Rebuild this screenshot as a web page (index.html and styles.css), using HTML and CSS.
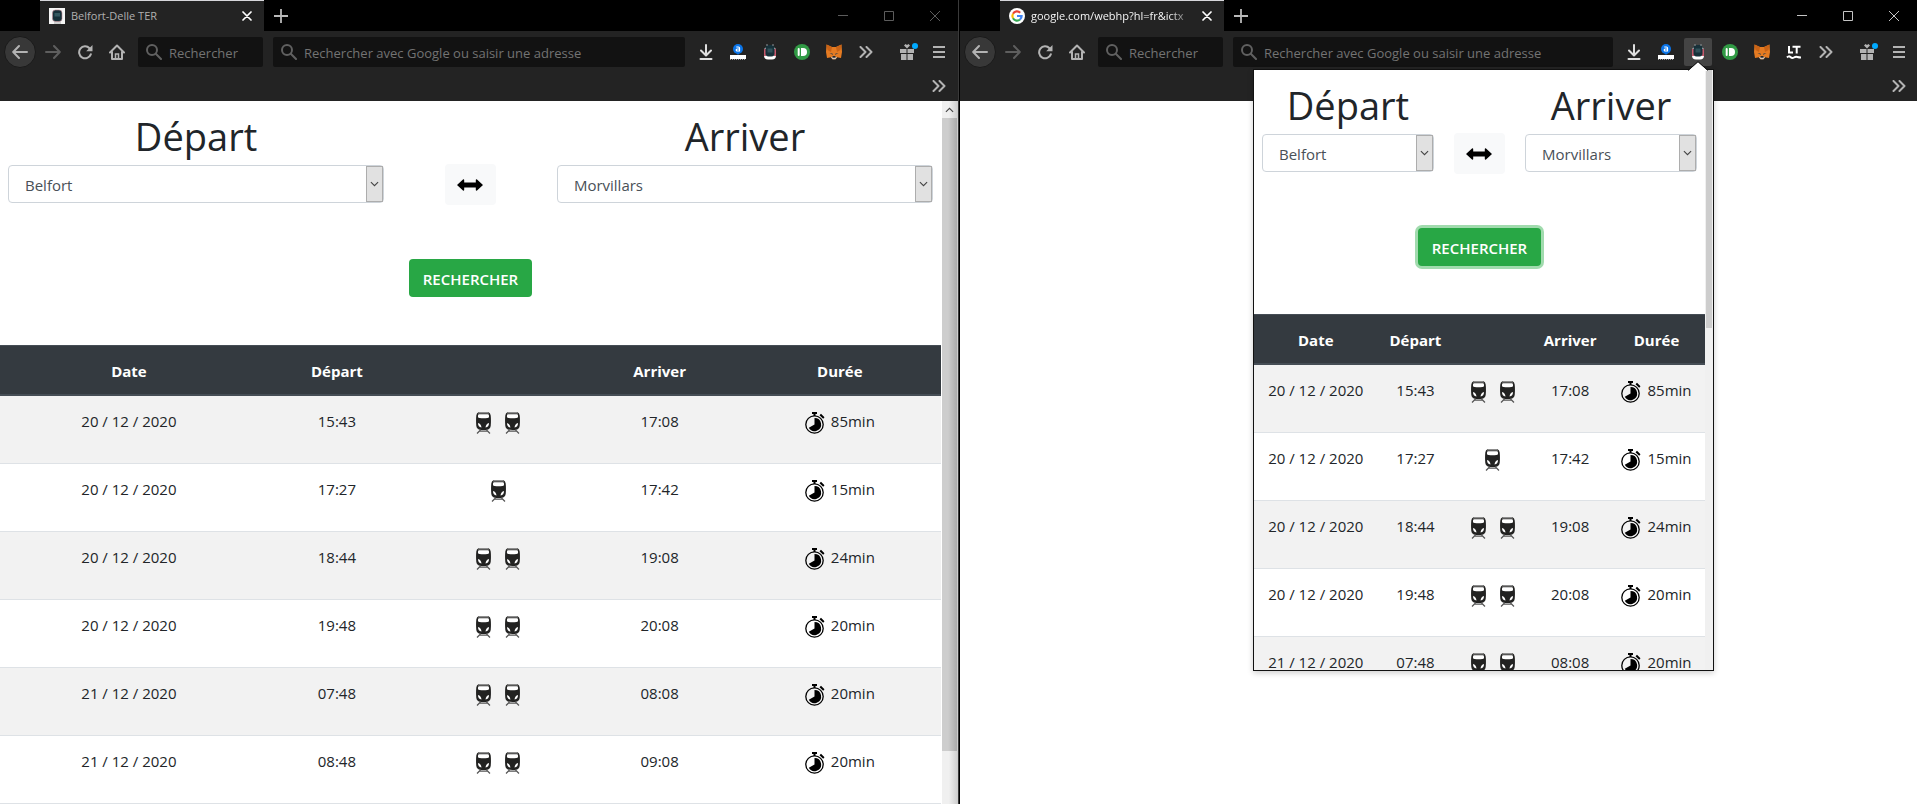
FILE: index.html
```
<!DOCTYPE html>
<html lang="fr">
<head>
<meta charset="utf-8">
<title>Belfort-Delle TER</title>
<link rel="stylesheet" href="styles.css">
</head>
<body>
<svg class="defs" aria-hidden="true">
  <symbol id="i-back" viewBox="0 0 16 16"><path d="M15 8H1.500M7 2L1.200 8 7 14" fill="none" stroke="currentColor" stroke-width="2" stroke-linecap="round" stroke-linejoin="round"/></symbol>
  <symbol id="i-forward" viewBox="0 0 16 16"><path d="M1 8h13.500M9 2l5.800 6L9 14" fill="none" stroke="currentColor" stroke-width="2" stroke-linecap="round" stroke-linejoin="round"/></symbol>
  <symbol id="i-reload" viewBox="0 0 16 16"><path d="M13.800 10.300A6 6 0 1 1 12.500 4.200" fill="none" stroke="currentColor" stroke-width="2" stroke-linecap="round"/><path d="M15.500 1v6.300H9.200z" fill="currentColor"/></symbol>
  <symbol id="i-home" viewBox="0 0 16 16"><path d="M1 8.500L8 1.500l7 7M3 8v7h10V8" fill="none" stroke="currentColor" stroke-width="2" stroke-linecap="round" stroke-linejoin="round"/><path d="M6.500 15v-5h3v5z" fill="none" stroke="currentColor" stroke-width="1.500"/></symbol>
  <symbol id="i-search" viewBox="0 0 16 16"><circle cx="6" cy="6" r="5" fill="none" stroke="currentColor" stroke-width="2"/><path d="M9.800 9.800L15 15" stroke="currentColor" stroke-width="2" stroke-linecap="round"/></symbol>
  <symbol id="i-close" viewBox="0 0 10 10"><path d="M1 1l8 8M9 1L1 9" stroke="currentColor" stroke-width="1.700" stroke-linecap="round"/></symbol>
  <symbol id="i-plus" viewBox="0 0 14 14"><path d="M7 0v14M0 7h14" stroke="currentColor" stroke-width="1.800"/></symbol>
  <symbol id="i-min" viewBox="0 0 10 10"><path d="M0 4.500h10" stroke="currentColor"/></symbol>
  <symbol id="i-max" viewBox="0 0 10 10"><path d="M.5.5h9v9h-9z" fill="none" stroke="currentColor"/></symbol>
  <symbol id="i-quit" viewBox="0 0 10 10"><path d="M0 0l10 10M10 0L0 10" stroke="currentColor"/></symbol>
  <symbol id="i-download" viewBox="0 0 16 16"><path d="M8 1v10M3 6.500l5 5 5-5M2.500 15h11" fill="none" stroke="#dedede" stroke-width="2" stroke-linecap="round" stroke-linejoin="round"/></symbol>
  <symbol id="i-mark" viewBox="0 0 16 16"><circle cx="8" cy="5" r="5" fill="#0a74e8"/><path d="M6.500 9h3L8 11z" fill="#0a74e8"/><path d="M6.300 3h2.200q1 0 1 1v3H7.200Q6.200 7 6.200 6t1-1h2.300" fill="none" stroke="#fff" stroke-width="1.200"/><path d="M0 11h16v4H0z" fill="#fff"/><path d="M0 15.500h16" stroke="#999" stroke-dasharray="1 1"/></symbol>
  <symbol id="i-ter" viewBox="0 0 16 16"><rect x="2" y="3" width="12" height="12.500" rx="4" fill="#fff"/><path d="M3 5v7M13 5v7" stroke="#b4253e" stroke-width="1.500"/><rect x="3.500" y="1" width="9" height="11.500" rx="3" fill="#17313a"/><path d="M5.500 4.500h5v4h-5z" fill="#31525a"/><path d="M5 0v2M11 0v2" stroke="#8b9296"/></symbol>
  <symbol id="i-ter-tab" viewBox="0 0 16 16"><path fill="#f5f5f5" d="M0 0h16v16H0z"/><rect x="3.500" y="2" width="9.500" height="11.500" rx="3" fill="#17313a" stroke="#bc8791" stroke-width=".6"/><path d="M5.500 5h5.500v3.500H5.500z" fill="#355860"/><path d="M5 15h7" stroke="#aaa"/></symbol>
  <symbol id="i-green" viewBox="0 0 16 16"><circle cx="8" cy="8" r="8" fill="#319a45"/><path d="M4.700 5v6" stroke="#fff" stroke-width="2" stroke-linecap="round"/><path d="M7 4h2a4 4 0 0 1 0 8H7z" fill="#fff"/></symbol>
  <symbol id="i-fox" viewBox="0 0 16 16"><path d="M.5.500L6 3h4l5.500-2.500L16 8l-1 6-4-.8-1.500 2h-3L5 13.200 1 14 0 8z" fill="#e57b22"/><path d="M.5.500L6 3 5 8 1.500 6zM15.500.500L10 3l1 5 3.500-2z" fill="#c96316"/><path d="M3.500 9l3 .5.5 1.500zM12.500 9l-3 .5-.5 1.500z" fill="#34424d"/><path d="M5 13.200l1.500-.5h3l1.500.5-1.500 2h-3z" fill="#d8c5b5"/><path d="M6.500 12h3v1.700h-3z" fill="#24272b"/></symbol>
  <symbol id="i-lt" viewBox="0 0 16 16"><path d="M3 2v6.500h4M6.500 2.700h8M10.700 2.700v6.800" fill="none" stroke="#fff" stroke-width="2"/><path d="M1 13.500q1.700-2 3.400-.5t3.500.5 3.500-.5 3.600.5" fill="none" stroke="#fff" stroke-width="2"/></symbol>
  <symbol id="i-more" viewBox="0 0 14 12"><path d="M1.500 1l5 5-5 5M7.500 1l5 5-5 5" fill="none" stroke="currentColor" stroke-width="2" stroke-linecap="round" stroke-linejoin="round"/></symbol>
  <symbol id="i-gift" viewBox="0 0 18 18"><path d="M0 6h6.500v4H0zM7.500 6H14v4H7.500zM1 11h5.500v6H1zM7.500 11H13v6H7.500zM7 5.500L4 2.500l1.500-1.500L7 2l1.500-1L10 2.500z" fill="currentColor"/><circle cx="15" cy="3" r="3" fill="#00aaff"/></symbol>
  <symbol id="i-menu" viewBox="0 0 12 12"><path d="M0 1h12M0 6h12M0 11h12" stroke="currentColor" stroke-width="2"/></symbol>
  <symbol id="i-google" viewBox="0 0 16 16"><circle cx="8" cy="8" r="8" fill="#fff"/><g fill="none" stroke-width="2.200"><path d="M11.200 4.700A4.600 4.600 0 0 0 4 5.700" stroke="#ea4335"/><path d="M4 5.700a4.600 4.600 0 0 0 0 4.600" stroke="#fbbc05"/><path d="M4 10.300a4.600 4.600 0 0 0 7 1.200" stroke="#34a853"/><path d="M11 11.500A4.600 4.600 0 0 0 12.600 8H8" stroke="#4285f4"/></g></symbol>
  <symbol id="i-chevron" viewBox="0 0 10 6"><path d="M1 .8l4 4 4-4" fill="none" stroke="#444" stroke-width="1.200"/></symbol>
  <symbol id="i-swap" viewBox="0 0 26 12"><path d="M0 6l6-5.500q1.200-.5 1.200.8v2.200h11.600V1.300q0-1.300 1.200-.8L26 6l-6 5.500q-1.200.5-1.200-.8V8.500H7.200v2.200q0 1.300-1.200.8z"/></symbol>
  <symbol id="i-train" viewBox="0 0 15 22"><path d="M3 0h9q2.500.5 2.700 3.500.5 5 0 10.500-.3 3-2.500 3.500-4.700 1-9.400 0Q.6 17 .3 14q-.5-5.500 0-10.500Q.5.500 3 0z" fill="#222221"/><path d="M3.200 0h8.600l1.700 1.500h-12z" fill="#8d8d8d"/><path d="M2.600 2.300h9.800q.9 1 .6 2.600-.2.900-1.600 1.100-3.900.6-7.800 0-1.400-.2-1.600-1.100-.3-1.600.6-2.600z" fill="#fff"/><path d="M2 11q3 .8 3.500 4.500Q2 15.200 2 11zM13 11q-3 .8-3.500 4.500Q13 15.200 13 11z" fill="#fff"/><path d="M4 19.200h7M4.500 18L1 21.500M10.500 18l3.500 3.500" fill="none" stroke="#555" stroke-width="1.200"/></symbol>
  <symbol id="i-watch" viewBox="0 0 20 22"><path d="M7 0h5v2h-1.500v2h-2V2H7zM14.500 3.200L16 1.800l3.500 3.400-1.300 1.500z"/><circle cx="9.500" cy="12.500" r="8.700" fill="none" stroke="#000" stroke-width="1.300"/><path d="M9.500 12.500V5.900a6.600 6.600 0 1 1-5.700 9.900z"/></symbol>
</svg>

<main class="desktop">
  <section class="window window-left" aria-label="Belfort-Delle TER">
    <div class="tabbar">
      <div class="tab"><svg class="favicon"><use href="#i-ter-tab"/></svg><span class="tab-title tab-title-dim">Belfort-Delle TER</span><button class="tab-close" aria-label="Fermer l’onglet"><svg><use href="#i-close"/></svg></button></div>
      <button class="new-tab" aria-label="Nouvel onglet"><svg><use href="#i-plus"/></svg></button>
      <div class="controls controls-dim"><button aria-label="Réduire"><svg><use href="#i-min"/></svg></button><button aria-label="Agrandir"><svg><use href="#i-max"/></svg></button><button aria-label="Fermer"><svg><use href="#i-quit"/></svg></button></div>
    </div>
    <div class="toolbar">
      <div class="nav">
        <button class="tool back" aria-label="Précédent"><svg><use href="#i-back"/></svg></button>
        <button class="tool forward" aria-label="Suivant"><svg><use href="#i-forward"/></svg></button>
        <button class="tool" aria-label="Actualiser"><svg><use href="#i-reload"/></svg></button>
        <button class="tool" aria-label="Accueil"><svg><use href="#i-home"/></svg></button>
      </div>
      <label class="field field-search"><svg><use href="#i-search"/></svg><input type="text" placeholder="Rechercher" aria-label="Rechercher"></label>
      <label class="field field-url"><svg><use href="#i-search"/></svg><input type="text" placeholder="Rechercher avec Google ou saisir une adresse" aria-label="Adresse"></label>
      <div class="tools">
        <button class="tool" aria-label="Téléchargements"><svg><use href="#i-download"/></svg></button>
        <button class="tool" aria-label="Assistant"><svg><use href="#i-mark"/></svg></button>
        <button class="tool" aria-label="Belfort-Delle TER"><svg><use href="#i-ter"/></svg></button>
        <button class="tool" aria-label="Notifications"><svg><use href="#i-green"/></svg></button>
        <button class="tool" aria-label="Portefeuille"><svg><use href="#i-fox"/></svg></button>
        <button class="tool more" aria-label="Plus d’outils"><svg><use href="#i-more"/></svg></button>
        <button class="tool gift" aria-label="Nouveautés"><svg><use href="#i-gift"/></svg></button>
        <button class="tool menu" aria-label="Menu"><svg><use href="#i-menu"/></svg></button>
      </div>
    </div>
    <div class="bookmarks"><button class="tool more" aria-label="Marque-pages"><svg><use href="#i-more"/></svg></button></div>
    <div class="viewport">
      <div class="app">
        <form class="form">
          <div class="station"><label class="title" for="from-page">Départ</label><div class="select"><select id="from-page"><option>Belfort</option></select><span class="select-arrow"><svg><use href="#i-chevron"/></svg></span></div></div>
          <button class="swap" type="button" aria-label="Inverser"><svg><use href="#i-swap"/></svg></button>
          <div class="station"><label class="title" for="to-page">Arriver</label><div class="select"><select id="to-page"><option>Morvillars</option></select><span class="select-arrow"><svg><use href="#i-chevron"/></svg></span></div></div>
          <button class="submit" type="button">RECHERCHER</button>
        </form>
        <table class="trips">
          <thead><tr><th class="c-date">Date</th><th class="c-time">Départ</th><th class="c-train"></th><th class="c-time">Arriver</th><th>Durée</th></tr></thead>
          <tbody>
            <tr><td>20 / 12 / 2020</td><td>15:43</td><td><span class="trains"><svg><use href="#i-train"/></svg><svg><use href="#i-train"/></svg></span></td><td>17:08</td><td><span class="duration"><svg><use href="#i-watch"/></svg>85min</span></td></tr>
            <tr><td>20 / 12 / 2020</td><td>17:27</td><td><span class="trains"><svg><use href="#i-train"/></svg></span></td><td>17:42</td><td><span class="duration"><svg><use href="#i-watch"/></svg>15min</span></td></tr>
            <tr><td>20 / 12 / 2020</td><td>18:44</td><td><span class="trains"><svg><use href="#i-train"/></svg><svg><use href="#i-train"/></svg></span></td><td>19:08</td><td><span class="duration"><svg><use href="#i-watch"/></svg>24min</span></td></tr>
            <tr><td>20 / 12 / 2020</td><td>19:48</td><td><span class="trains"><svg><use href="#i-train"/></svg><svg><use href="#i-train"/></svg></span></td><td>20:08</td><td><span class="duration"><svg><use href="#i-watch"/></svg>20min</span></td></tr>
            <tr><td>21 / 12 / 2020</td><td>07:48</td><td><span class="trains"><svg><use href="#i-train"/></svg><svg><use href="#i-train"/></svg></span></td><td>08:08</td><td><span class="duration"><svg><use href="#i-watch"/></svg>20min</span></td></tr>
            <tr><td>21 / 12 / 2020</td><td>08:48</td><td><span class="trains"><svg><use href="#i-train"/></svg><svg><use href="#i-train"/></svg></span></td><td>09:08</td><td><span class="duration"><svg><use href="#i-watch"/></svg>20min</span></td></tr>
          </tbody>
        </table>
      </div>
      <div class="scrollbar"><span class="scroll-up"><svg><use href="#i-chevron"/></svg></span><span class="scroll-thumb"></span></div>
    </div>
  </section>

  <section class="window window-right" aria-label="Google">
    <div class="tabbar">
      <div class="tab"><svg class="favicon"><use href="#i-google"/></svg><span class="tab-title tab-title-fade">google.com/webhp?hl=fr&amp;ictx</span><button class="tab-close" aria-label="Fermer l’onglet"><svg><use href="#i-close"/></svg></button></div>
      <button class="new-tab" aria-label="Nouvel onglet"><svg><use href="#i-plus"/></svg></button>
      <div class="controls"><button aria-label="Réduire"><svg><use href="#i-min"/></svg></button><button aria-label="Agrandir"><svg><use href="#i-max"/></svg></button><button aria-label="Fermer"><svg><use href="#i-quit"/></svg></button></div>
    </div>
    <div class="toolbar">
      <div class="nav">
        <button class="tool back" aria-label="Précédent"><svg><use href="#i-back"/></svg></button>
        <button class="tool forward" aria-label="Suivant"><svg><use href="#i-forward"/></svg></button>
        <button class="tool" aria-label="Actualiser"><svg><use href="#i-reload"/></svg></button>
        <button class="tool" aria-label="Accueil"><svg><use href="#i-home"/></svg></button>
      </div>
      <label class="field field-search"><svg><use href="#i-search"/></svg><input type="text" placeholder="Rechercher" aria-label="Rechercher"></label>
      <label class="field field-url"><svg><use href="#i-search"/></svg><input type="text" placeholder="Rechercher avec Google ou saisir une adresse" aria-label="Adresse"></label>
      <div class="tools">
        <button class="tool" aria-label="Téléchargements"><svg><use href="#i-download"/></svg></button>
        <button class="tool" aria-label="Assistant"><svg><use href="#i-mark"/></svg></button>
        <button class="tool tool-active" aria-label="Belfort-Delle TER"><svg><use href="#i-ter"/></svg></button>
        <button class="tool" aria-label="Notifications"><svg><use href="#i-green"/></svg></button>
        <button class="tool" aria-label="Portefeuille"><svg><use href="#i-fox"/></svg></button>
        <button class="tool" aria-label="Correcteur"><svg><use href="#i-lt"/></svg></button>
        <button class="tool more" aria-label="Plus d’outils"><svg><use href="#i-more"/></svg></button>
        <button class="tool gift" aria-label="Nouveautés"><svg><use href="#i-gift"/></svg></button>
        <button class="tool menu" aria-label="Menu"><svg><use href="#i-menu"/></svg></button>
      </div>
    </div>
    <div class="bookmarks"><button class="tool more" aria-label="Marque-pages"><svg><use href="#i-more"/></svg></button></div>
    <div class="viewport"></div>

    <div class="popup">
      <svg class="popup-arrow" viewBox="0 0 20 10"><path d="M0 10L10 1l10 9z" fill="#fff"/><path d="M0 9.500L10 .7l10 8.800" fill="none" stroke="#111"/></svg>
      <div class="popup-body">
      <div class="app">
        <form class="form">
          <div class="station"><label class="title" for="from-popup">Départ</label><div class="select"><select id="from-popup"><option>Belfort</option></select><span class="select-arrow"><svg><use href="#i-chevron"/></svg></span></div></div>
          <button class="swap" type="button" aria-label="Inverser"><svg><use href="#i-swap"/></svg></button>
          <div class="station"><label class="title" for="to-popup">Arriver</label><div class="select"><select id="to-popup"><option>Morvillars</option></select><span class="select-arrow"><svg><use href="#i-chevron"/></svg></span></div></div>
          <button class="submit submit-focus" type="button">RECHERCHER</button>
        </form>
        <table class="trips">
          <thead><tr><th class="c-date">Date</th><th class="c-time">Départ</th><th class="c-train"></th><th class="c-time">Arriver</th><th>Durée</th></tr></thead>
          <tbody>
            <tr><td>20 / 12 / 2020</td><td>15:43</td><td><span class="trains"><svg><use href="#i-train"/></svg><svg><use href="#i-train"/></svg></span></td><td>17:08</td><td><span class="duration"><svg><use href="#i-watch"/></svg>85min</span></td></tr>
            <tr><td>20 / 12 / 2020</td><td>17:27</td><td><span class="trains"><svg><use href="#i-train"/></svg></span></td><td>17:42</td><td><span class="duration"><svg><use href="#i-watch"/></svg>15min</span></td></tr>
            <tr><td>20 / 12 / 2020</td><td>18:44</td><td><span class="trains"><svg><use href="#i-train"/></svg><svg><use href="#i-train"/></svg></span></td><td>19:08</td><td><span class="duration"><svg><use href="#i-watch"/></svg>24min</span></td></tr>
            <tr><td>20 / 12 / 2020</td><td>19:48</td><td><span class="trains"><svg><use href="#i-train"/></svg><svg><use href="#i-train"/></svg></span></td><td>20:08</td><td><span class="duration"><svg><use href="#i-watch"/></svg>20min</span></td></tr>
            <tr><td>21 / 12 / 2020</td><td>07:48</td><td><span class="trains"><svg><use href="#i-train"/></svg><svg><use href="#i-train"/></svg></span></td><td>08:08</td><td><span class="duration"><svg><use href="#i-watch"/></svg>20min</span></td></tr>
          </tbody>
        </table>
      </div>
      <div class="popup-scroll"><span></span></div>
      </div>
    </div>
  </section>
</main>
</body>
</html>
```
FILE: styles.css
```
* { box-sizing: border-box; }
body { margin: 0; font-family: "Open Sans", "Noto Sans", sans-serif; font-size: 16px; line-height: 24px; color: #212529; background: #fff; }
button { padding: 0; border: 0; background: none; color: inherit; font: inherit; }
svg { display: block; flex: none; }
.defs { position: absolute; width: 0; height: 0; }

.desktop { display: grid; grid-template-columns: 960fr 957fr; height: 100vh; overflow: hidden; }
.window { position: relative; display: flex; flex-direction: column; min-width: 0; min-height: 0; }
.window-left { border-right: 1px solid #000; }
.window-left::after { content: ""; position: absolute; top: 0; right: 0; bottom: 0; width: 1px; background: #3a3a3a; }

.tabbar { display: flex; flex: none; height: 31px; padding-left: 40px; background: #000; color: #b9b9b9; }
.tab { display: flex; align-items: center; width: 224px; padding: 0 12px 0 9px; border-top: 1px solid #d7d7db; background: #232323; }
.favicon { width: 16px; height: 16px; }
.tab-title { flex: 1; min-width: 0; margin: 0 8px 0 6px; overflow: hidden; white-space: nowrap; font-size: 11px; line-height: 16px; color: #f4f4f4; }
.tab-title-dim { color: #b0b0b0; }
.tab-title-fade { -webkit-mask-image: linear-gradient(90deg, #000 85%, transparent); mask-image: linear-gradient(90deg, #000 85%, transparent); }
.tab-close { color: #fff; }
.tab-close svg { width: 10px; height: 10px; }
.new-tab { width: 34px; display: grid; place-items: center; }
.new-tab svg { width: 14px; height: 14px; }
.controls { display: flex; margin-left: auto; color: #c4c4c4; }
.controls-dim { color: #5c5c5c; }
.window-left .controls { padding-right: 1px; }
.controls button { width: 46px; display: grid; place-items: center; }
.controls svg { width: 10px; height: 10px; }

.toolbar { display: flex; flex: none; align-items: center; height: 42px; padding-left: 4px; background: #232323; color: #b3b3b3; }
.window-left .toolbar, .window-left .bookmarks { padding-right: 4px; }
.window-right .toolbar, .window-right .bookmarks { padding-right: 2px; }
.nav, .tools { display: flex; flex: none; align-items: center; }
.tool { display: grid; place-items: center; width: 32px; height: 32px; }
.tool svg { width: 16px; height: 16px; }
.back { margin-right: 1px; border: 1px solid #1a1a1a; border-radius: 50%; background: #383838; }
.forward { color: #5e5e5e; }
.more svg { width: 14px; height: 12px; }
.gift { margin-left: 9px; padding-left: 4px; }
.gift svg { width: 18px; height: 18px; }
.menu svg { width: 12px; height: 12px; }
.tool-active { width: 28px; height: 28px; margin: 0 2px; border-radius: 2px; background: #444; }
.tools { margin-left: 5px; }
.field { display: flex; align-items: center; height: 30px; gap: 7px; padding: 0 8px; border-radius: 2px; background: #121212; color: #606060; }
.field svg { width: 16px; height: 16px; }
.field input { flex: 1; min-width: 0; height: 24px; padding: 2px 0 0; border: 0; background: none; font: inherit; font-size: 13px; color: #ddd; }
.field input::placeholder { color: #737373; opacity: 1; }
.field-search { width: 125px; margin: 0 10px 0 5px; }
.field-url { flex: 1; min-width: 0; }
.bookmarks { display: flex; flex: none; justify-content: flex-end; height: 28px; background: #232323; color: #b3b3b3; }
.bookmarks .tool { height: 26px; }

.viewport { display: flex; flex: 1; min-height: 0; background: #fff; }
.app { flex: 1; min-width: 0; overflow: hidden; background: #fff; }
.scrollbar { display: flex; flex: none; flex-direction: column; width: 18px; padding-right: 2px; border-left: 1px solid #fff; background: linear-gradient(90deg, #f0f0f0 40%, #c8c8c8); }
.scroll-up { display: grid; place-items: center; height: 17px; }
.scroll-up svg { width: 9px; height: 6px; transform: rotate(180deg); }
.scroll-thumb { height: 90%; background: linear-gradient(90deg, #cdcdcd 40%, #ababab); }

.form { display: grid; grid-template-columns: 5fr 2fr 5fr; height: 244px; grid-template-rows: 104px 1fr; padding: 0; margin: 0; }
.station { min-width: 0; padding: 8px 8px 0; }
.title { display: block; height: 56px; font-size: 38px; line-height: 54px; text-align: center; }
.select { position: relative; }
.select select { display: block; width: 100%; height: 38px; padding: 2px 24px 0 16px; border: 1px solid #ced4da; border-radius: 4px; appearance: none; background: #fff; color: #495057; font: inherit; font-size: 15px; }
.select-arrow { position: absolute; top: 1px; right: 1px; bottom: 1px; display: grid; place-items: center; width: 17px; border: 1px solid #adadad; background: #e1e1e1; pointer-events: none; }
.select-arrow svg { width: 9px; height: 6px; }
.swap { display: grid; place-items: center; align-self: end; justify-self: center; width: 51px; height: 41px; border-radius: 4px; background: #f8f9fa; }
.swap svg { width: 26px; height: 12px; }
.submit { grid-column: 1 / -1; align-self: start; justify-self: center; height: 38px; margin-top: 54px; padding: 2px 14px 0; border-radius: 4px; background: #28a745; color: #fff; font-size: 15px; font-weight: 600; }
.submit-focus { box-shadow: 0 0 0 3px #a1dbae; }

.trips { width: 100%; table-layout: fixed; border-collapse: separate; border-spacing: 0; text-align: center; white-space: nowrap; }
.c-date { width: 27.4%; }
.c-time { width: 16.8%; }
.c-train { width: 17.5%; }
.trips th { height: 51px; padding: 13px 0 11px; border-top: 1px solid #454d55; border-bottom: 2px solid #454d55; background: #343a40; color: #fff; font-size: 15px; font-weight: 700; }
.trips td { height: 68px; padding: 13px 0 0; border-bottom: 1px solid #dee2e6; vertical-align: top; font-size: 15px; }
.trips tbody tr:nth-child(odd) { background: #f2f2f2; }
.trains { display: flex; justify-content: center; gap: 14px; padding-top: 3px; }
.trains svg { width: 15px; height: 22px; }
.duration { display: flex; justify-content: center; gap: 6px; }
.duration svg { width: 20px; height: 22px; margin-top: 3px; }

.popup { position: absolute; top: 69px; right: 203px; width: 461px; border: 1px solid #111; background: #fff; box-shadow: 0 2px 6px rgba(0, 0, 0, .2); }
.popup-body { display: flex; height: 600px; overflow: hidden; }
.popup-arrow { position: absolute; right: 5px; bottom: 100%; width: 20px; height: 10px; margin-bottom: -1px; }
.popup-scroll { flex: none; width: 8px; padding: 0 1px; background: #f0f0f0; }
.popup-scroll span { display: block; height: 43%; background: #cdcdcd; }
```
